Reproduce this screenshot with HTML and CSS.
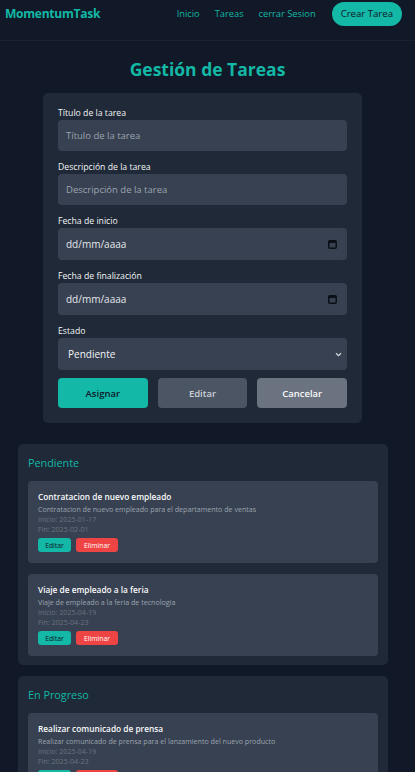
FILE: index.html
```html
<!DOCTYPE html>
<html lang="es">
<head>
<meta charset="utf-8">
<title>MomentumTask</title>
<link rel="stylesheet" href="styles.css">
</head>
<body>
<header class="topbar">
  <div class="logo">MomentumTask</div>
  <nav class="nav">
    <a href="#" class="nav-link">Inicio</a>
    <a href="#" class="nav-link">Tareas</a>
    <a href="#" class="nav-link">cerrar Sesion</a>
    <a href="#" class="btn-create">Crear Tarea</a>
  </nav>
</header>

<main class="main">
  <h1 class="page-title">Gestión de Tareas</h1>

  <form class="form-card">
    <div class="field">
      <label class="label">Título de la tarea</label>
      <input class="input" type="text" placeholder="Título de la tarea">
    </div>
    <div class="field">
      <label class="label">Descripción de la tarea</label>
      <input class="input" type="text" placeholder="Descripción de la tarea">
    </div>
    <div class="field">
      <label class="label">Fecha de inicio</label>
      <div class="input date">
        <span class="date-text">dd/mm/aaaa</span>
        <svg class="cal" width="9" height="9" viewBox="0 0 9 9"><rect x="0.75" y="0.75" width="7.5" height="7.5" rx="1.2" fill="none" stroke="#0b0f17" stroke-width="1.5"/><rect x="0.75" y="0.75" width="7.5" height="2.2" fill="#0b0f17"/></svg>
      </div>
    </div>
    <div class="field">
      <label class="label">Fecha de finalización</label>
      <div class="input date">
        <span class="date-text">dd/mm/aaaa</span>
        <svg class="cal" width="9" height="9" viewBox="0 0 9 9"><rect x="0.75" y="0.75" width="7.5" height="7.5" rx="1.2" fill="none" stroke="#0b0f17" stroke-width="1.5"/><rect x="0.75" y="0.75" width="7.5" height="2.2" fill="#0b0f17"/></svg>
      </div>
    </div>
    <div class="field">
      <label class="label">Estado</label>
      <div class="input select">
        <span class="select-text">Pendiente</span>
        <svg class="chev" width="7" height="5" viewBox="0 0 7 5"><path d="M1 1.2 L3.5 3.6 L6 1.2" fill="none" stroke="#d1d5db" stroke-width="1.3"/></svg>
      </div>
    </div>
    <div class="actions">
      <button type="button" class="btn btn-assign">Asignar</button>
      <button type="button" class="btn btn-edit">Editar</button>
      <button type="button" class="btn btn-cancel">Cancelar</button>
    </div>
  </form>

  <section class="column">
    <h2 class="column-title">Pendiente</h2>
    <div class="task">
      <div class="task-title">Contratacion de nuevo empleado</div>
      <div class="task-desc">Contratacion de nuevo empleado para el departamento de ventas</div>
      <div class="task-date">Inicio: 2025-01-17</div>
      <div class="task-date">Fin: 2025-02-01</div>
      <div class="task-actions">
        <button type="button" class="mini mini-edit">Editar</button>
        <button type="button" class="mini mini-del">Eliminar</button>
      </div>
    </div>
    <div class="task">
      <div class="task-title">Viaje de empleado a la feria</div>
      <div class="task-desc">Viaje de empleado a la feria de tecnologia</div>
      <div class="task-date">Inicio: 2025-04-19</div>
      <div class="task-date">Fin: 2025-04-23</div>
      <div class="task-actions">
        <button type="button" class="mini mini-edit">Editar</button>
        <button type="button" class="mini mini-del">Eliminar</button>
      </div>
    </div>
  </section>

  <section class="column">
    <h2 class="column-title">En Progreso</h2>
    <div class="task">
      <div class="task-title">Realizar comunicado de prensa</div>
      <div class="task-desc">Realizar comunicado de prensa para el lanzamiento del nuevo producto</div>
      <div class="task-date">Inicio: 2025-04-19</div>
      <div class="task-date">Fin: 2025-04-23</div>
      <div class="task-actions">
        <button type="button" class="mini mini-edit">Editar</button>
        <button type="button" class="mini mini-del">Eliminar</button>
      </div>
    </div>
  </section>
</main>
</body>
</html>
```

FILE: styles.css
```css
* { box-sizing: border-box; }

html, body {
  margin: 0;
  padding: 0;
  background: #111827;
  font-family: "Open Sans", "Noto Sans", "Liberation Sans", sans-serif;
  color: #e5e7eb;
}

.topbar {
  height: 41px;
  display: flex;
  align-items: flex-start;
  justify-content: space-between;
  padding: 2px 13px 0 5px;
  border-bottom: 1px solid #1a2231;
}

.logo {
  font-size: 12.1px;
  font-weight: 700;
  color: #14b8a6;
  line-height: 24px;
  letter-spacing: -0.3px;
}

.nav {
  display: flex;
  align-items: center;
  gap: 15px;
}

.nav-link {
  color: #14b8a6;
  text-decoration: none;
  font-size: 9.3px;
  line-height: 24px;
}

.btn-create {
  background: #14b8a6;
  color: #0f172a;
  text-decoration: none;
  font-size: 9.6px;
  line-height: 24px;
  height: 24px;
  padding: 0 9px;
  border-radius: 12px;
  margin-left: 1px;
}

.main {
  padding: 14px 0 20px;
}

.page-title {
  margin: 0 0 10px;
  text-align: center;
  font-size: 17.5px;
  font-weight: 700;
  color: #14b8a6;
  line-height: 28px;
}

.form-card {
  width: 319px;
  margin: 0 0 21px 43px;
  background: #1f2937;
  border-radius: 5px;
  padding: 14px 15px 15px;
  display: flex;
  flex-direction: column;
}

.field {
  display: flex;
  flex-direction: column;
  margin-bottom: 10px;
}

.label {
  font-size: 8.7px;
  line-height: 13px;
  color: #f3f4f6;
}

.input {
  height: 31px;
  background: #374151;
  border: none;
  border-radius: 4px;
  padding: 0 8px;
  font-family: inherit;
  font-size: 9.5px;
  color: #e5e7eb;
  outline: none;
}

.input::placeholder { color: #9ca3af; }

.date, .select {
  display: flex;
  align-items: center;
  justify-content: space-between;
  height: 32px;
}

.date-text {
  font-size: 10px;
  font-weight: 500;
  color: #e5e7eb;
}

.cal { margin-right: 2px; }

.select-text {
  font-size: 10px;
  font-weight: 500;
  color: #f3f4f6;
  padding-left: 2px;
}

.chev { margin-right: -3px; }

.actions {
  display: grid;
  grid-template-columns: repeat(3, 1fr);
  gap: 10px;
  margin-top: -2px;
}

.btn {
  height: 30px;
  border: none;
  border-radius: 4px;
  font-family: inherit;
  font-size: 9.5px;
  font-weight: 600;
}

.btn-assign { background: #14b8a6; color: #0f172a; }
.btn-edit { background: #4b5563; color: #cbd0d8; }
.btn-cancel { background: #6b7280; color: #f9fafb; }

.column {
  width: 370px;
  margin: 0 0 11px 18px;
  background: #1f2937;
  border-radius: 5px;
  padding: 11px 10px 9px;
}

.column-title {
  margin: 0 0 10px;
  font-size: 10.8px;
  font-weight: 500;
  line-height: 16px;
  color: #14b8a6;
}

.task {
  background: #374151;
  border-radius: 4px;
  padding: 10px 10px 11px;
  margin-bottom: 11px;
}

.task:last-child { margin-bottom: 0; }

.task-title {
  font-size: 8.3px;
  font-weight: 600;
  line-height: 12px;
  margin-bottom: 1px;
  color: #f9fafb;
}

.task-desc {
  font-size: 7.1px;
  line-height: 10px;
  color: #9ca3af;
}

.task-date {
  font-size: 7.1px;
  line-height: 10px;
  color: #6b7280;
}

.task-actions {
  display: flex;
  gap: 5px;
  margin-top: 4px;
}

.mini {
  height: 14px;
  border: none;
  border-radius: 3px;
  font-family: inherit;
  font-size: 6.8px;
  padding: 0;
}

.mini-edit { background: #14b8a6; color: #0f172a; width: 33px; }
.mini-del { background: #ef4444; color: #fff; width: 42px; }
```
